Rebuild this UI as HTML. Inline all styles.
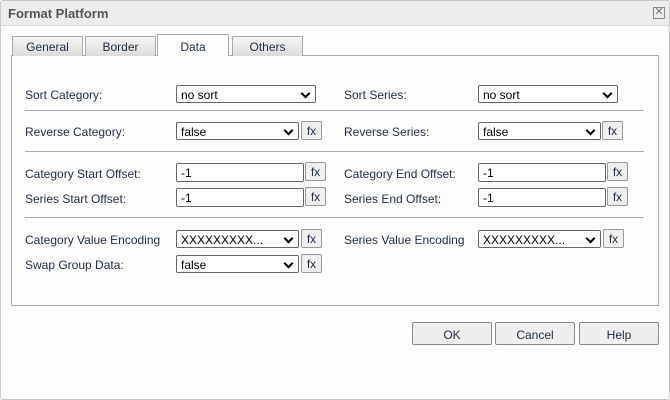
<!DOCTYPE html>
<html><head><style>
*{box-sizing:border-box;margin:0;padding:0}
body{width:670px;height:400px;background:#fff;font-family:"Liberation Sans",sans-serif;font-size:12px;color:#1e2d4a;position:relative;overflow:hidden}
.a{position:absolute}
.dlg{left:0;top:0;width:670px;height:400px;border:1px solid #c8c8c8;border-radius:3px;background:#fdfdfd}
.title{left:1px;top:1px;width:668px;height:25px;background:#ececec;border-bottom:1px solid #d8d8d8;font-weight:bold;font-size:13px;color:#555;padding:5px 0 0 7px}
.close{left:653px;top:7px;width:12px;height:12px;border:1px solid #888;color:#777;font-size:11px;line-height:9px;text-align:center}
.tab{top:36px;height:20px;width:71px;border:1px solid #aaa;border-bottom:none;background:linear-gradient(#f6f6f6,#dcdcdc);text-align:center;font-size:12px;padding-top:3px;color:#1e2d4a}
.tab.act{top:34px;height:22px;background:#fdfdfd;padding-top:5px;z-index:2}
.panel{left:11px;top:55px;width:648px;height:251px;border:1px solid #aaa;background:#fdfdfd}
.lbl{font-size:12px}
.sel,.inp{height:18px;border:1px solid #666;border-radius:2px;background:#fff;font-size:12px;padding:2px 0 0 4px;color:#000}
.sel::after{content:"";position:absolute;right:6px;top:4px;width:5px;height:5px;border-right:2px solid #000;border-bottom:2px solid #000;transform:rotate(45deg)}
.fx{width:21px;height:19px;border:1px solid #999;border-radius:2px;background:#efefef;font-size:12px;text-align:center;padding-top:2px;color:#1e2d4a}
.sep{left:25px;width:619px;height:1px;background:#aaa}
.btn{top:322px;width:80px;height:23px;border:1px solid #888;border-radius:2px;background:#efefef;text-align:center;padding-top:5px;font-size:12px;color:#1e2d4a}
</style></head><body>
<div class="a dlg"></div>
<div class="a title">Format Platform</div>
<div class="a close">✕</div>
<div class="a panel"></div>
<div class="a tab" style="left:12px">General</div>
<div class="a tab" style="left:85px">Border</div>
<div class="a tab act" style="left:157px;width:72px">Data</div>
<div class="a tab" style="left:232px">Others</div>

<div class="a lbl" style="left:25px;top:88px">Sort Category:</div>
<div class="a sel" style="left:176px;top:85px;width:140px">no sort</div>
<div class="a lbl" style="left:344px;top:88px">Sort Series:</div>
<div class="a sel" style="left:478px;top:85px;width:140px">no sort</div>
<div class="a sep" style="top:110px"></div>

<div class="a lbl" style="left:25px;top:125px">Reverse Category:</div>
<div class="a sel" style="left:176px;top:122px;width:123px">false</div>
<div class="a fx" style="left:301px;top:121px">fx</div>
<div class="a lbl" style="left:344px;top:125px">Reverse Series:</div>
<div class="a sel" style="left:478px;top:122px;width:123px">false</div>
<div class="a fx" style="left:602px;top:121px">fx</div>
<div class="a sep" style="top:151px"></div>

<div class="a lbl" style="left:25px;top:167px">Category Start Offset:</div>
<div class="a inp" style="left:176px;top:163px;width:128px;height:19px">-1</div>
<div class="a fx" style="left:305px;top:162px">fx</div>
<div class="a lbl" style="left:344px;top:167px">Category End Offset:</div>
<div class="a inp" style="left:478px;top:163px;width:128px;height:19px">-1</div>
<div class="a fx" style="left:607px;top:162px">fx</div>
<div class="a lbl" style="left:25px;top:192px">Series Start Offset:</div>
<div class="a inp" style="left:176px;top:188px;width:128px;height:19px">-1</div>
<div class="a fx" style="left:305px;top:187px">fx</div>
<div class="a lbl" style="left:344px;top:192px">Series End Offset:</div>
<div class="a inp" style="left:478px;top:188px;width:128px;height:19px">-1</div>
<div class="a fx" style="left:607px;top:187px">fx</div>
<div class="a sep" style="top:217px"></div>

<div class="a lbl" style="left:25px;top:233px">Category Value Encoding</div>
<div class="a sel" style="left:176px;top:230px;width:123px">XXXXXXXXX...</div>
<div class="a fx" style="left:301px;top:229px">fx</div>
<div class="a lbl" style="left:344px;top:233px">Series Value Encoding</div>
<div class="a sel" style="left:478px;top:230px;width:123px">XXXXXXXXX...</div>
<div class="a fx" style="left:603px;top:229px">fx</div>
<div class="a lbl" style="left:25px;top:258px">Swap Group Data:</div>
<div class="a sel" style="left:176px;top:255px;width:123px">false</div>
<div class="a fx" style="left:301px;top:254px">fx</div>

<div class="a btn" style="left:412px">OK</div>
<div class="a btn" style="left:495px">Cancel</div>
<div class="a btn" style="left:579px">Help</div>
</body></html>
